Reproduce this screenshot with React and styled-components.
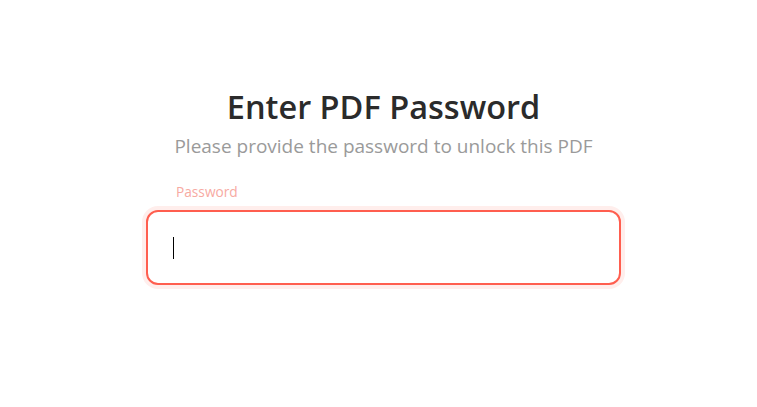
import React from "react";
import styled, { createGlobalStyle } from "styled-components";

const Global = createGlobalStyle`
  html, body { margin: 0; padding: 0; background: #ffffff; }
  body { font-family: "Open Sans", "Noto Sans", sans-serif; }
  * { box-sizing: border-box; }
`;

const Page = styled.div`
  width: 757px;
  height: 407px;
  display: flex;
  justify-content: center;
  padding: 85px 0 0 10px;
`;

const Card = styled.div`
  width: 475px;
  display: flex;
  flex-direction: column;
  align-items: stretch;
`;

const Title = styled.h1`
  margin: 0;
  text-align: center;
  font-size: 32.5px;
  font-weight: 600;
  line-height: 44px;
  color: #2b2b2b;
`;

const Subtitle = styled.p`
  margin: 3px 0 0;
  text-align: center;
  font-size: 19px;
  line-height: 28px;
  color: #9a9a9a;
`;

const Field = styled.div`
  margin-top: 24px;
  display: flex;
  flex-direction: column;
  gap: 10px;
`;

const Label = styled.label`
  padding-left: 30px;
  font-size: 13.7px;
  line-height: 16px;
  color: #f7aaa2;
`;

const InputWrap = styled.div`
  position: relative;
`;

const Input = styled.input`
  display: block;
  height: 75px;
  width: 100%;
  border: 2px solid #ff5e4f;
  border-radius: 12px;
  box-shadow: 0 0 0 4px #ffeeec;
  padding: 0 26px;
  font-size: 20px;
  font-family: inherit;
  outline: none;
  caret-color: transparent;
`;

const Caret = styled.span`
  position: absolute;
  left: 27px;
  top: 27px;
  width: 1px;
  height: 22px;
  background: #000;
  pointer-events: none;
`;

export default function App() {
  return (
    <>
      <Global />
      <Page>
        <Card>
          <Title>Enter PDF Password</Title>
          <Subtitle>Please provide the password to unlock this PDF</Subtitle>
          <Field>
            <Label htmlFor="pw">Password</Label>
            <InputWrap>
              <Input id="pw" type="password" />
              <Caret />
            </InputWrap>
          </Field>
        </Card>
      </Page>
    </>
  );
}
